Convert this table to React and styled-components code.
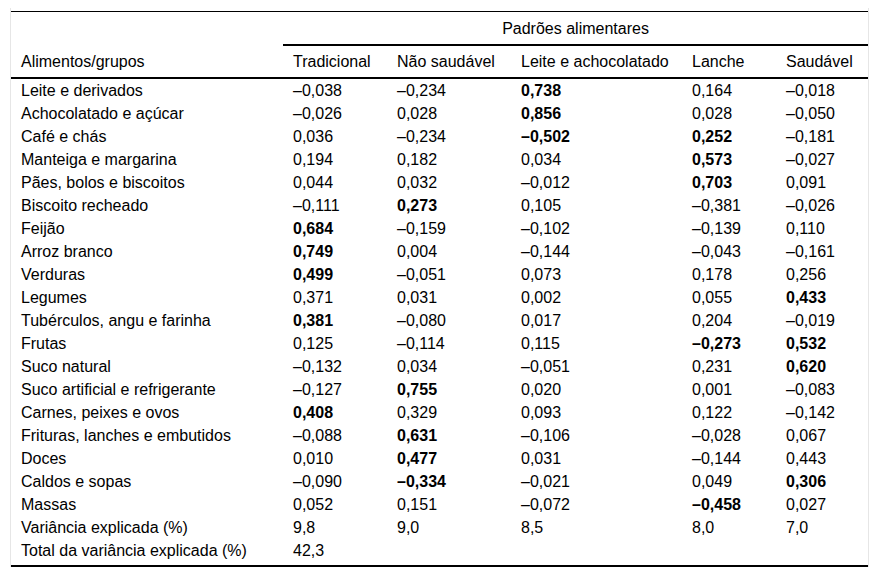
import React from 'react';
import styled, { createGlobalStyle } from 'styled-components';

const GlobalStyle = createGlobalStyle`
  body {
    margin: 0;
    background: #fff;
    font-family: "Liberation Sans", Arial, sans-serif;
    color: #000;
  }
`;

const Frame = styled.div`
  margin: 8px 0 0 10px;
  width: 857px;
  padding-top: 3px;
  border-left: 1px solid #e6e6e6;
  border-right: 1px solid #e6e6e6;
`;

const Table = styled.table`
  width: 857px;
  border-collapse: collapse;
  table-layout: fixed;
  font-size: 16px;
  line-height: 19px;
  border-top: 1px solid #000;
  border-bottom: 2px solid #000;
`;

const HeadCell = styled.th`
  font-weight: normal;
  text-align: ${(p) => (p.$center ? 'center' : 'left')};
  vertical-align: bottom;
  padding: 0 10px 6px 10px;
  height: ${(p) => (p.$tall ? '25px' : '26px')};
  border-bottom: ${(p) => (p.$line ? '2px solid #000' : 'none')};
`;

const Cell = styled.td`
  padding: ${(p) => (p.$last ? '2px 10px 5px 10px' : '2px 10px')};
  font-weight: ${(p) => (p.$bold ? 'bold' : 'normal')};
  white-space: nowrap;
  vertical-align: top;
`;

const cols = [272, 104, 124, 171, 94, 92];

const rows = [
  ['Leite e derivados', '–0,038', '–0,234', '*0,738', '0,164', '–0,018'],
  ['Achocolatado e açúcar', '–0,026', '0,028', '*0,856', '0,028', '–0,050'],
  ['Café e chás', '0,036', '–0,234', '*–0,502', '*0,252', '–0,181'],
  ['Manteiga e margarina', '0,194', '0,182', '0,034', '*0,573', '–0,027'],
  ['Pães, bolos e biscoitos', '0,044', '0,032', '–0,012', '*0,703', '0,091'],
  ['Biscoito recheado', '–0,111', '*0,273', '0,105', '–0,381', '–0,026'],
  ['Feijão', '*0,684', '–0,159', '–0,102', '–0,139', '0,110'],
  ['Arroz branco', '*0,749', '0,004', '–0,144', '–0,043', '–0,161'],
  ['Verduras', '*0,499', '–0,051', '0,073', '0,178', '0,256'],
  ['Legumes', '0,371', '0,031', '0,002', '0,055', '*0,433'],
  ['Tubérculos, angu e farinha', '*0,381', '–0,080', '0,017', '0,204', '–0,019'],
  ['Frutas', '0,125', '–0,114', '0,115', '*–0,273', '*0,532'],
  ['Suco natural', '–0,132', '0,034', '–0,051', '0,231', '*0,620'],
  ['Suco artificial e refrigerante', '–0,127', '*0,755', '0,020', '0,001', '–0,083'],
  ['Carnes, peixes e ovos', '*0,408', '0,329', '0,093', '0,122', '–0,142'],
  ['Frituras, lanches e embutidos', '–0,088', '*0,631', '–0,106', '–0,028', '0,067'],
  ['Doces', '0,010', '*0,477', '0,031', '–0,144', '0,443'],
  ['Caldos e sopas', '–0,090', '*–0,334', '–0,021', '0,049', '*0,306'],
  ['Massas', '0,052', '0,151', '–0,072', '*–0,458', '0,027'],
  ['Variância explicada (%)', '9,8', '9,0', '8,5', '8,0', '7,0'],
  ['Total da variância explicada (%)', '42,3', '', '', '', ''],
];

export default function App() {
  return (
    <>
      <GlobalStyle />
      <Frame>
        <Table>
          <colgroup>
            {cols.map((w, i) => (
              <col key={i} style={{ width: w }} />
            ))}
          </colgroup>
          <thead>
            <tr>
              <HeadCell rowSpan={2} $line>Alimentos/grupos</HeadCell>
              <HeadCell colSpan={5} $center $line>Padrões alimentares</HeadCell>
            </tr>
            <tr>
              <HeadCell $line $tall>Tradicional</HeadCell>
              <HeadCell $line $tall>Não saudável</HeadCell>
              <HeadCell $line $tall>Leite e achocolatado</HeadCell>
              <HeadCell $line $tall>Lanche</HeadCell>
              <HeadCell $line $tall>Saudável</HeadCell>
            </tr>
          </thead>
          <tbody>
            {rows.map((r, i) => (
              <tr key={i}>
                {r.map((v, j) => {
                  const bold = v.startsWith('*');
                  return (
                    <Cell key={j} $bold={bold} $last={i === rows.length - 1}>
                      {bold ? v.slice(1) : v}
                    </Cell>
                  );
                })}
              </tr>
            ))}
          </tbody>
        </Table>
      </Frame>
    </>
  );
}
